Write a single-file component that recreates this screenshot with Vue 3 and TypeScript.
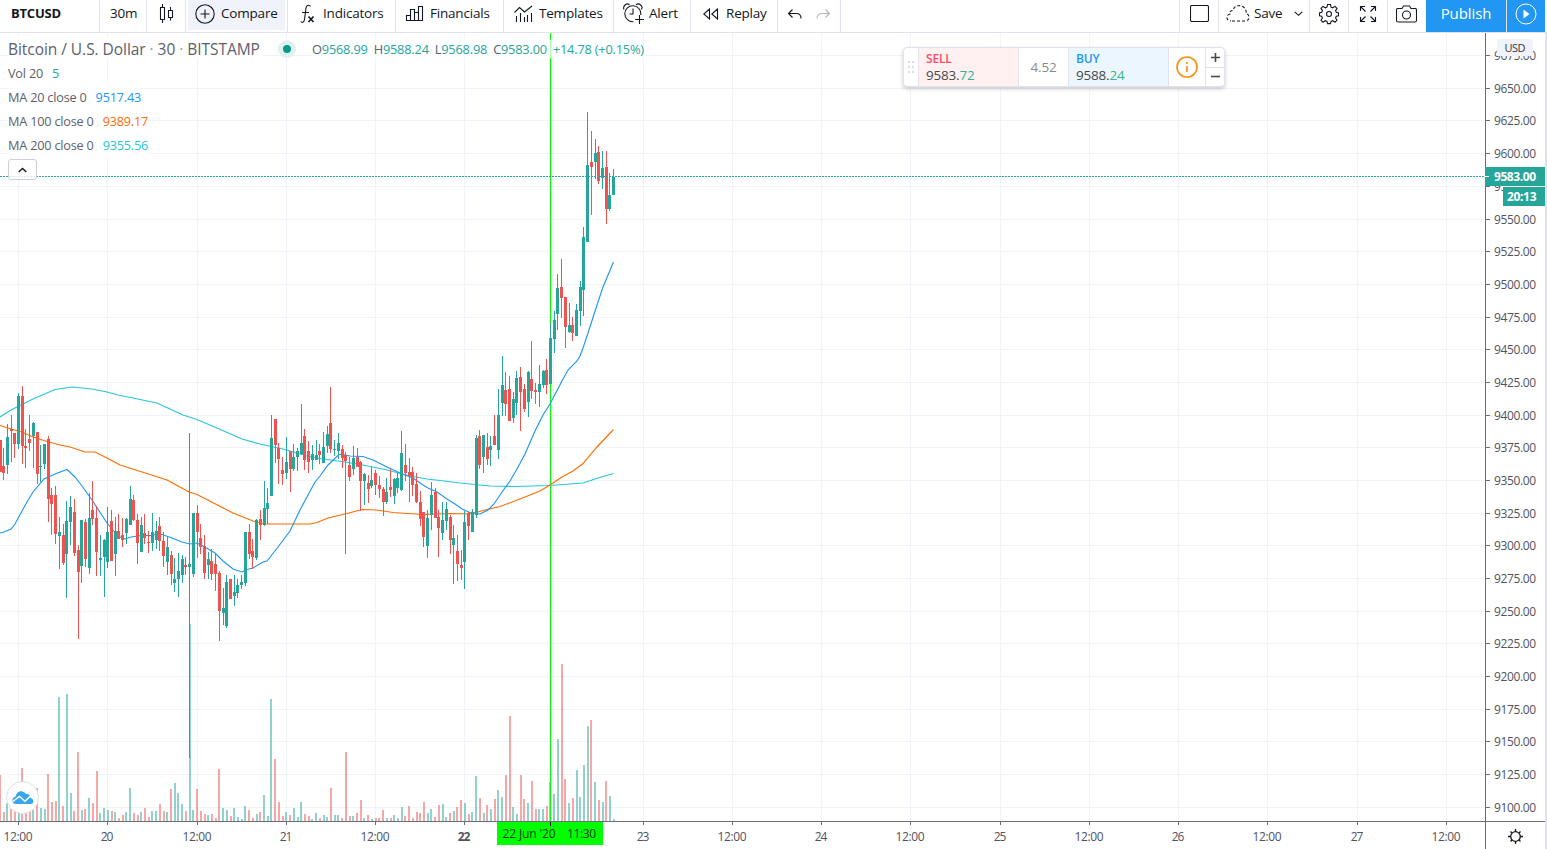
<script setup lang="ts">
import { computed, ref } from 'vue';

// [high, body top, body bottom, low, rising, volume]
type Bar = [number, number, number, number, 0 | 1, number];

const bars: Bar[] = [
  [440, 440, 472, 472, 0, 46], [448, 466, 473, 480, 0, 9], [424, 437, 465, 474, 1, 18], [415, 429, 431, 462, 0, 12],
  [433, 433, 444, 458, 0, 10], [393, 396, 444, 449, 1, 8], [386, 396, 446, 464, 0, 53], [429, 446, 448, 468, 0, 8],
  [415, 439, 443, 451, 0, 10], [422, 423, 436, 468, 1, 11], [432, 432, 474, 484, 0, 33], [445, 466, 467, 482, 1, 13],
  [444, 444, 464, 469, 1, 12], [436, 439, 499, 522, 0, 47], [488, 495, 504, 535, 0, 19], [486, 495, 534, 544, 0, 20],
  [517, 532, 536, 569, 1, 124], [524, 535, 563, 565, 0, 15], [501, 521, 554, 598, 1, 127], [496, 507, 522, 545, 1, 28],
  [499, 512, 553, 556, 0, 10], [545, 550, 572, 639, 0, 69], [520, 520, 566, 583, 1, 11], [519, 522, 559, 567, 0, 12],
  [493, 518, 568, 574, 1, 23], [481, 510, 519, 525, 0, 18], [506, 518, 552, 576, 0, 50], [535, 558, 560, 576, 1, 8],
  [539, 540, 557, 597, 1, 13], [507, 532, 562, 568, 1, 11], [510, 521, 561, 561, 0, 10], [517, 531, 554, 576, 1, 9],
  [514, 531, 539, 539, 0, 3], [518, 535, 540, 547, 0, 6], [518, 519, 533, 544, 1, 9], [486, 499, 525, 525, 1, 33],
  [495, 500, 520, 521, 0, 8], [514, 520, 543, 564, 0, 6], [517, 525, 552, 552, 1, 9], [514, 533, 538, 544, 0, 13],
  [531, 542, 543, 553, 0, 4], [513, 532, 543, 551, 1, 10], [521, 531, 540, 549, 1, 10], [517, 526, 541, 551, 0, 17],
  [532, 541, 556, 567, 0, 10], [537, 547, 562, 575, 1, 9], [551, 555, 574, 585, 0, 32], [558, 579, 583, 592, 1, 38],
  [553, 571, 579, 597, 1, 28], [555, 559, 575, 583, 1, 17], [557, 565, 567, 575, 0, 10], [433, 564, 567, 758, 1, 197],
  [513, 513, 574, 577, 1, 11], [505, 513, 532, 558, 0, 32], [524, 538, 547, 554, 0, 10], [535, 546, 573, 579, 0, 7],
  [552, 559, 565, 579, 1, 6], [549, 561, 574, 580, 0, 7], [553, 564, 574, 591, 0, 3], [571, 573, 611, 641, 0, 52],
  [588, 608, 613, 625, 1, 13], [575, 582, 626, 628, 1, 11], [579, 579, 599, 599, 0, 5], [575, 592, 596, 606, 1, 13],
  [579, 585, 593, 598, 1, 4], [575, 582, 585, 589, 1, 2], [532, 532, 583, 586, 1, 15], [524, 532, 554, 559, 0, 11],
  [539, 551, 557, 569, 0, 3], [519, 520, 558, 560, 1, 7], [510, 519, 525, 540, 0, 9], [481, 508, 525, 526, 1, 26],
  [488, 503, 509, 524, 1, 5], [415, 438, 496, 496, 1, 122], [419, 419, 445, 463, 0, 62], [443, 448, 459, 484, 0, 19],
  [457, 470, 474, 485, 0, 5], [437, 462, 473, 479, 1, 9], [451, 451, 469, 492, 0, 6], [444, 457, 469, 471, 1, 13],
  [448, 451, 457, 471, 1, 4], [404, 443, 454, 455, 1, 19], [429, 436, 460, 470, 0, 7], [441, 451, 462, 473, 0, 5],
  [445, 454, 460, 470, 1, 2], [440, 455, 460, 460, 1, 8], [444, 451, 455, 464, 0, 3], [432, 447, 463, 463, 1, 6],
  [426, 434, 446, 453, 1, 4], [387, 423, 449, 453, 0, 33], [440, 449, 450, 456, 1, 6], [433, 443, 451, 459, 1, 6],
  [445, 449, 458, 468, 0, 3], [452, 455, 461, 554, 0, 69], [457, 465, 477, 481, 0, 5], [446, 458, 469, 475, 1, 5],
  [448, 457, 467, 467, 0, 8], [461, 462, 481, 511, 0, 21], [473, 474, 481, 505, 1, 3], [475, 483, 489, 503, 0, 6],
  [467, 480, 486, 488, 1, 2], [470, 473, 485, 495, 0, 3], [476, 485, 489, 498, 0, 3], [487, 489, 502, 516, 0, 11],
  [478, 492, 502, 504, 1, 3], [469, 487, 490, 497, 0, 3], [478, 479, 496, 504, 1, 6], [473, 478, 488, 493, 1, 3],
  [431, 453, 490, 491, 1, 14], [444, 465, 473, 481, 0, 5], [458, 472, 476, 502, 0, 15], [467, 472, 485, 496, 0, 3],
  [473, 484, 502, 503, 0, 9], [491, 502, 519, 526, 0, 8], [512, 512, 537, 547, 0, 19], [510, 518, 546, 558, 1, 8],
  [482, 495, 515, 530, 1, 12], [488, 492, 518, 518, 0, 4], [510, 517, 528, 557, 0, 16], [502, 520, 533, 540, 1, 17],
  [502, 509, 521, 530, 1, 4], [515, 517, 540, 554, 0, 8], [525, 538, 545, 584, 1, 10], [535, 551, 564, 581, 0, 14],
  [550, 565, 568, 580, 0, 21], [511, 522, 562, 589, 1, 18], [512, 513, 526, 540, 0, 7], [509, 512, 532, 532, 1, 9],
  [435, 438, 515, 518, 1, 45], [430, 436, 465, 469, 0, 23], [435, 435, 457, 473, 1, 8], [433, 447, 459, 465, 0, 16],
  [436, 446, 450, 466, 1, 12], [415, 436, 445, 445, 0, 22], [389, 415, 450, 459, 1, 31], [356, 385, 403, 416, 1, 24],
  [372, 390, 404, 416, 0, 46], [376, 389, 421, 421, 0, 105], [392, 399, 418, 423, 1, 14], [371, 378, 403, 415, 1, 7],
  [367, 377, 392, 431, 0, 46], [384, 389, 409, 412, 0, 22], [371, 372, 402, 417, 1, 18], [341, 379, 391, 399, 0, 40],
  [383, 390, 392, 404, 0, 12], [365, 384, 392, 407, 1, 12], [370, 371, 385, 388, 1, 12], [359, 370, 385, 394, 0, 15],
  [323, 338, 384, 384, 1, 39], [311, 320, 339, 353, 1, 27], [274, 288, 314, 330, 1, 82], [259, 287, 298, 318, 0, 157],
  [297, 297, 327, 348, 0, 42], [303, 325, 332, 333, 1, 18], [317, 325, 333, 341, 0, 23], [304, 310, 336, 336, 1, 51],
  [281, 287, 311, 326, 1, 24], [227, 237, 290, 316, 1, 56], [112, 165, 242, 242, 1, 95], [131, 162, 167, 215, 0, 101],
  [139, 153, 162, 179, 1, 39], [146, 152, 181, 184, 0, 21], [151, 168, 178, 189, 1, 19], [151, 167, 209, 224, 0, 40],
  [173, 195, 209, 211, 1, 25], [169, 177, 195, 195, 1, 2],
];

const barStep = 3.72;
const candles = computed(() =>
  bars.map(([high, top, bottom, low, up, volume], i) => ({
    x: Math.max(0, Math.round(18 + barStep * (i - 5))),
    volumeX: Math.floor(18 + barStep * (i - 5)),
    high,
    top,
    bottom,
    low,
    volume,
    side: up ? 'up' : 'down',
  })),
);

const ma20 =
  '0,533 4,532 11,529 15,524 22,511 27,502 33,492 44,479 55,474 67,469.500 75,477 82,486 92,500 107,523 118,536 125,539 131,537 141,535.500 150,535.500 158,534 162,534.500 172,538 182,542 190,544 197,543 203,546 215,553 223,561 233,569 242,572 247,569.500 253,568 263,562 267,561 278,547 290,531 300,510 315,482 320,476 328,465 339,454.500 343,454.500 350,456 363,456.500 373,460 387,467 400,473 413,478 423,485 428,488 437,492 447,499 455,504 462,509 472,513.500 480,514 488,510 494,504 502,492 510,481 517,469 525,454 535,431 543,415 550,404 562,381 568,370 577,361 580,356 583,348 588,333 598,302 603,287 613.500,262';
const ma100 =
  '0,425.500 11,429 22,432 33,437 47,441.500 60,445 70,447 85,452 95,452 107,458 120,465 150,474.500 167,480 189,492 197,494.500 233,513 253,521 265,524 280,524 310,524 317,522.500 328,518 347,513.500 362,509.500 377,510 393,512.500 423,514.500 450,513.500 470,514 483,510.500 500,506.500 520,499 540,491 550,485 562,477 573,471 583,463.500 597,447 613.500,429.500';
const ma200 =
  '0,417 11,410 22,404.500 33,399 55,389.500 72,387 92,389 107,392 118,395 140,399.500 157,403 183,415 197,419.500 217,428 242,439 260,444 283,449 307,456 320,458.500 345,462 363,465 387,470 410,476 427,479 440,480.500 460,483 490,486 515,486.500 550,485.500 583,483 598,478 613.500,473.500';

const priceLevels = Array.from({ length: 24 }, (_, i) => ({
  y: Math.floor(55.6 + 32.68 * i),
  label: (9675 - 25 * i).toFixed(2),
}));

const timeTicks = [
  { x: 18, label: '12:00' },
  { x: 107, label: '20' },
  { x: 197, label: '12:00' },
  { x: 286, label: '21' },
  { x: 375, label: '12:00' },
  { x: 464, label: '22', strong: true },
  { x: 553, label: '' },
  { x: 643, label: '23' },
  { x: 732, label: '12:00' },
  { x: 821, label: '24' },
  { x: 910, label: '12:00' },
  { x: 1000, label: '25' },
  { x: 1089, label: '12:00' },
  { x: 1178, label: '26' },
  { x: 1267, label: '12:00' },
  { x: 1357, label: '27' },
  { x: 1446, label: '12:00' },
];

const ohlc = [
  { key: 'O', value: '9568.99' },
  { key: 'H', value: '9588.24' },
  { key: 'L', value: '9568.98' },
  { key: 'C', value: '9583.00' },
];

const studies = [
  { name: 'Vol 20', value: '5', color: 'teal' },
  { name: 'MA 20 close 0', value: '9517.43', color: 'blue' },
  { name: 'MA 100 close 0', value: '9389.17', color: 'orange' },
  { name: 'MA 200 close 0', value: '9355.56', color: 'cyan' },
];

const legendOpen = ref(true);
const quantity = ref(1);
</script>

<template>
  <div class="app">
    <header class="toolbar">
      <button class="tool symbol">BTCUSD</button>
      <button class="tool interval">30m</button>
      <button class="tool style">
        <svg width="28" height="28" viewBox="0 0 28 28" class="icon">
          <path d="M9.500 4v4M9.500 19v4M7.500 7.500h4v12h-4zM17.500 7v3M17.500 17.500v3M15.500 10.500h4v7h-4z" />
        </svg>
      </button>
      <button class="tool compare">
        <span class="hover">
          <svg width="20" height="20" viewBox="0 0 20 20" class="icon">
            <circle cx="10" cy="10" r="9.200" />
            <path d="M10 5.500v9M5.500 10h9" />
          </svg>
          <span class="caption">Compare</span>
        </span>
      </button>
      <button class="tool indicators">
        <svg width="16" height="20" viewBox="0 0 16 20" class="icon">
          <path d="M10.500 2.500C9.500 .5 6.500 .8 6 4L4.500 15.500C4 18.500 2 19 .8 17.500M2 8.500h7" />
          <path d="M8.500 12.500l5 5.500M13.500 12.500l-5 5.500" stroke-width="1.600" />
        </svg>
        <span class="caption">Indicators</span>
      </button>
      <button class="tool financials">
        <svg width="19" height="18" viewBox="0 0 19 18" class="icon">
          <path d="M1.500 10.500h4v5h-4zM5.500 4.500h4v11h-4zM9.500 7.500h4v8h-4zM13.500 1.500h4v14h-4z" />
        </svg>
        <span class="caption">Financials</span>
      </button>
      <button class="tool templates">
        <svg width="19" height="18" viewBox="0 0 19 18" class="icon">
          <path d="M.5 7.500l5-5 5 4.500 7.500-6M2.500 11v6M6.500 8v9M10.500 12v5M13.500 10v7M17.500 8v9" />
        </svg>
        <span class="caption">Templates</span>
      </button>
      <button class="tool alert">
        <svg width="21" height="21" viewBox="0 0 21 21" class="icon">
          <path d="M10.500 18.700A8 8 0 1 1 17.700 12M10 5.500v5.500H6.500M1 6.500C-.5 3 3.500-.5 6.500 1.700M18.500 6.500C20.500 3 16-.5 13 1.700M16.500 12v9M12 16.500h9" />
        </svg>
        <span class="caption">Alert</span>
      </button>
      <button class="tool replay">
        <svg width="16" height="12" viewBox="0 0 16 12" class="icon">
          <path d="M6.500 1v10L.8 6zM14.500 1v10L8.800 6z" />
        </svg>
        <span class="caption">Replay</span>
      </button>
      <div class="tool history">
        <svg width="14" height="10" viewBox="0 0 14 10" class="icon">
          <path d="M4.500 .5l-4 4 4 4M.5 4.500h8c3 0 4.500 2 4.500 5" />
        </svg>
        <svg width="14" height="10" viewBox="0 0 14 10" class="icon faded">
          <path d="M9.500 .5l4 4-4 4M13.500 4.500h-8c-3 0-4.500 2-4.500 5" />
        </svg>
      </div>
      <div class="spacer"></div>
      <button class="tool square">
        <svg width="19" height="17" viewBox="0 0 19 17" class="icon">
          <rect x=".5" y=".5" width="18" height="16" rx="1.500" />
        </svg>
      </button>
      <button class="tool save">
        <svg width="24" height="17" viewBox="0 0 24 17" class="icon">
          <path stroke-dasharray="3 2" d="M6 16h13c5 0 5.500-6.500 1-7.500C21 4 17 .5 13 .6 9.500.6 7.500 3 7 5.500 4 5.500 3.500 7.500 4 9-.5 10 0 16 5 16" />
        </svg>
        <span class="caption">Save</span>
        <svg width="9" height="6" viewBox="0 0 9 6" class="icon"><path d="M.7 .8l3.800 3.500L8.300 .8" /></svg>
      </button>
      <button class="tool square">
        <svg width="22" height="22" viewBox="0 0 22 22" class="icon">
          <circle cx="11" cy="11" r="2.500" />
          <path d="M9.500 1.500h3l.5 2.600 1.700.7L17 3.400l2 2-1.400 2.200.7 1.800 2.200.5v2.800l-2.200.5-.7 1.800L19 17.200l-2 2-2.300-1.500-1.700.7-.5 2.200h-3L9 18.400l-1.700-.7L5 19.200l-2-2L4.400 15l-.7-1.800-2.200-.5V9.900l2.200-.5.700-1.800L3 5.400l2-2 2.300 1.400L9 4.100z" />
        </svg>
      </button>
      <button class="tool square">
        <svg width="18" height="18" viewBox="0 0 18 18" class="icon">
          <path d="M1.500 6V1.500H6M1.500 1.500L6.500 6.500M12 1.500h4.500V6M16.500 1.500l-5 5M1.500 12v4.500H6M1.500 16.500l5-5M12 16.500h4.500V12M16.500 16.500l-5-5" />
        </svg>
      </button>
      <button class="tool camera">
        <svg width="21" height="18" viewBox="0 0 21 18" class="icon">
          <path d="M2 3.500h4l1.500-2.500h6L15 3.500h4c1 0 1.500.5 1.500 1.500v10.500c0 1-.5 1.500-1.500 1.500H2C1 17 .5 16.500.5 15.500V5C.5 4 1 3.500 2 3.500z" />
          <circle cx="10.500" cy="10" r="4" />
        </svg>
      </button>
      <button class="publish">Publish</button>
      <button class="play">
        <svg width="22" height="22" viewBox="0 0 22 22">
          <circle cx="11" cy="11" r="10" fill="none" stroke="#fff" />
          <path d="M8.500 6.500v9l6-4.500z" fill="#fff" />
        </svg>
      </button>
    </header>

    <div class="body">
      <main class="pane">
        <svg width="1485" height="788" viewBox="0 33 1485 788" class="plot">
          <g class="grid">
            <rect v-for="t in timeTicks" :key="t.x" :x="t.x" y="33" width="1" height="788" />
            <rect v-for="p in priceLevels" :key="p.label" x="0" :y="p.y" width="1485" height="1" />
          </g>
          <g class="volume">
            <rect
              v-for="(c, i) in candles"
              :key="i"
              :class="c.side"
              :x="c.volumeX"
              :y="821 - c.volume"
              width="2"
              :height="c.volume"
            />
          </g>
          <rect x="550" y="33" width="1" height="788" fill="#00ff00" />
          <polyline :points="ma200" class="ma" stroke="#26c6da" />
          <polyline :points="ma100" class="ma" stroke="#ff6d00" />
          <polyline :points="ma20" class="ma" stroke="#2196f3" />
          <g v-for="(c, i) in candles" :key="i" :class="c.side">
            <rect :x="c.x" :y="c.high" width="1" :height="c.low - c.high" />
            <rect :x="c.x - 1" :y="c.top" width="3" :height="c.bottom - c.top" />
          </g>
          <path d="M0 176.500H1485" stroke="#26a69a" stroke-dasharray="2 1" />
        </svg>

        <div class="legend">
          <div class="headline">
            <span class="title">Bitcoin / U.S. Dollar <i>·</i> 30 <i>·</i> BITSTAMP</span>
            <span class="status"></span>
            <span class="ohlc">
              <span v-for="o in ohlc" :key="o.key">{{ o.key }}<b>{{ o.value }}</b></span>
              <b class="change">+14.78 (+0.15%)</b>
            </span>
          </div>
          <template v-if="legendOpen">
            <div v-for="s in studies" :key="s.name" class="study">
              <span>{{ s.name }}</span>
              <span :class="s.color">{{ s.value }}</span>
            </div>
          </template>
          <button class="collapse" @click="legendOpen = !legendOpen">
            <svg width="9" height="6" viewBox="0 0 9 6"><path d="M.7 5l3.800-3.600L8.300 5" /></svg>
          </button>
        </div>

        <div class="trade">
          <div class="grip"><i v-for="n in 6" :key="n"></i></div>
          <div class="side sell">
            <strong>SELL</strong>
            <span>9583.<em>72</em></span>
          </div>
          <div class="spread">4.52</div>
          <div class="side buy">
            <strong>BUY</strong>
            <span>9588.<em>24</em></span>
          </div>
          <div class="info">
            <svg width="22" height="22" viewBox="0 0 22 22">
              <circle cx="11" cy="11" r="10" />
              <path d="M11 10v6M11 6v2" />
            </svg>
          </div>
          <div class="steps">
            <button @click="quantity++"><svg width="9" height="9"><path d="M4.500 0v9M0 4.500h9" /></svg></button>
            <button @click="quantity--"><svg width="9" height="9"><path d="M0 4.500h9" /></svg></button>
          </div>
        </div>

        <div class="logo">
          <svg width="22" height="14" viewBox="0 0 22 14">
            <path d="M4 13C-.5 13-1 7 3.500 5.500 4.500 1 8-.5 11 .7c1.500.5 2.400 1.300 3 2.300 3-.3 4.500 1.500 4.600 4 3 .5 4.500 6 0 6z" fill="#37a6ef" />
            <path d="M.8 10.500l6.700-5 5.500 4.700L19.500 4" fill="none" stroke="#fff" stroke-width="1.500" />
          </svg>
        </div>
      </main>

      <aside class="prices">
        <svg width="60" height="788" viewBox="1485 33 60 788">
          <rect x="1485" y="33" width="1" height="788" class="line" />
          <g v-for="p in priceLevels" :key="p.label">
            <rect x="1486" :y="p.y" width="4" height="1" class="line" />
            <text x="1494" :y="p.y + 5" textLength="42" class="tick">{{ p.label }}</text>
          </g>
          <rect x="1497" y="39" width="36" height="17" rx="2" fill="#f0f3fa" />
          <text x="1504.500" y="52" textLength="21" class="usd">USD</text>
          <rect x="1485" y="167" width="60" height="19" class="up" />
          <rect x="1485" y="176" width="4" height="1" fill="#fff" />
          <text x="1494" y="181" textLength="42" class="tag">9583.00</text>
          <rect x="1502" y="186" width="43" height="1" fill="#fff" />
          <rect x="1503" y="187" width="42" height="19" class="up" />
          <text x="1507" y="201" textLength="29.500" class="tag">20:13</text>
        </svg>
      </aside>

      <footer class="times">
        <svg width="1545" height="28" viewBox="0 821 1545 28">
          <rect x="0" y="821" width="1545" height="1" class="line" />
          <rect x="1485" y="821" width="1" height="28" class="line" />
          <template v-for="t in timeTicks" :key="t.x">
            <rect :x="t.x" y="822" width="1" height="3" class="line" />
            <text
              :x="t.x"
              y="841"
              text-anchor="middle"
              class="tick"
              :class="{ strong: t.strong }"
              :textLength="t.label.length > 2 ? 29 : t.label ? 12.5 : undefined"
            >{{ t.label }}</text>
          </template>
          <rect x="497" y="822" width="106" height="23" fill="#00ff00" />
          <rect x="550" y="822" width="1" height="4" fill="#000" />
          <text x="502.500" y="838" textLength="53" class="cursor">22 Jun '20</text>
          <text x="567" y="838" textLength="29" class="cursor">11:30</text>
          <g class="sun">
            <circle cx="1515.500" cy="836.500" r="4.800" />
            <path d="M1515.500 829v2.500M1515.500 841.500v2.500M1508 836.500h2.500M1520.500 836.500h2.500M1510.500 831.500l1.500 1.500M1519 840l1.500 1.500M1520.500 831.500l-1.500 1.500M1512 840l-1.500 1.500" />
          </g>
        </svg>
      </footer>
    </div>
  </div>
</template>

<style>
body {
  margin: 0;
  overflow: hidden;
}
</style>

<style scoped>
.app{
  width: 1547px;
  height: 849px;
  background: #fff;
  font-family: "Trebuchet MS", "Open Sans", "Noto Sans", sans-serif;
  color: #131722;
  overflow: hidden;
}
button{
  font: inherit;
  color: inherit;
  background: none;
  border: 0;
  padding: 0;
  letter-spacing: inherit;
}
svg{
  display: block;
  flex: none;
}
.toolbar{
  box-sizing: border-box;
  display: flex;
  height: 33px;
  border-bottom: 1px solid #e0e3eb;
  font-size: 13.5px;
  letter-spacing: -0.2px;
}
.tool{
  box-sizing: border-box;
  display: flex;
  align-items: center;
  flex: none;
  height: 32px;
  padding-bottom: 5px;
  border-right: 1px solid #e0e3eb;
}
.caption{ padding-bottom: 2px; }
.icon{
  fill: none;
  stroke: #131722;
  stroke-width: 1.1;
}
.faded{ stroke: #b2b5be; }
.symbol{
  width: 100px;
  padding: 0 0 7px 11px;
  font-size: 13px;
  font-weight: 700;
}
.interval{ width: 47px; padding: 0 0 7px 10px; }
.style{ width: 39px; padding-left: 6px; }
.compare{ width: 102px; padding: 0 2px 2px; }
.compare .hover{
  box-sizing: border-box;
  display: flex;
  align-items: center;
  gap: 6px;
  width: 97px;
  height: 30px;
  padding: 0 0 3px 7px;
  background: #f0f3fa;
}
.indicators{ width: 108px; padding-left: 12px; gap: 7px; }
.financials{ width: 108px; padding-left: 9px; gap: 6px; }
.templates{ width: 110px; padding-left: 10px; gap: 6px; }
.alert{ width: 77px; padding-left: 9px; gap: 5px; }
.replay{ width: 87px; padding-left: 12px; gap: 7px; }
.history{ width: 63px; padding-left: 10px; gap: 14px; }
.spacer{
  flex: 1;
  border-right: 1px solid #e0e3eb;
}
.square{ width: 39px; justify-content: center; }
.save{ width: 91px; padding-left: 7px; gap: 4px; }
.save .icon:last-child{ margin-left: 8px; }
.camera{ width: 38px; padding-left: 8px; border-right: 0; }
.publish,
.play{
  display: flex;
  align-items: center;
  justify-content: center;
  box-sizing: border-box;
  height: 32px;
  padding-bottom: 5px;
  background: #2196f3;
  color: #fff;
}
.publish{
  width: 80px;
  padding-bottom: 7px;
  font-size: 15px;
  letter-spacing: -0.1px;
}
.play{
  width: 39px;
  padding-right: 1px;
  border-left: 1px solid #e0e3eb;
  margin-right: 2px;
}
.body{
  box-sizing: border-box;
  display: grid;
  grid-template-columns: 1485px 60px;
  grid-template-rows: 788px 28px;
  width: 1547px;
  border-right: 2px solid #e0e3eb;
}
.pane{ position: relative; }
.times{ grid-column: 1 / 3; }
.grid{ fill: #f0f3fa; }
.up{ fill: #26a69a; }
.down{ fill: #ef5350; }
.volume{ opacity: 0.5; }
.ma{
  fill: none;
  stroke-width: 1.15;
}
.line{ fill: #6a6d78; }
.tick{
  fill: #50535e;
  font-size: 12px;
}
.strong{ font-weight: 700; }
.usd{ fill: #333640; font-size: 11px; }
.tag{
  fill: #fff;
  font-size: 12px;
  font-weight: 700;
}
.cursor{
  fill: #003c00;
  font-size: 12px;
}
.sun{
  fill: none;
  stroke: #131722;
  stroke-width: 1.3;
}
.legend{
  position: absolute;
  top: 4px;
  left: 8px;
  color: #5d606b;
  font-size: 12.8px;
  letter-spacing: -0.2px;
}
.headline{
  display: flex;
  align-items: center;
  height: 24px;
  white-space: nowrap;
}
.title{
  width: 254px;
  font-size: 15.5px;
  letter-spacing: -0.05px;
  background: rgba(255, 255, 255, 0.7);
}
.title i{ font-style: normal; color: #9598a1; }
.status{
  width: 8px;
  height: 8px;
  margin: 0 16px;
  border: 5px solid #dff2f0;
  border-radius: 50%;
  background: #089981;
}
.ohlc{
  display: flex;
  gap: 6px;
  background: rgba(255, 255, 255, 0.7);
}
.ohlc b{
  color: #26a69a;
  font-weight: 400;
}
.study{
  display: flex;
  align-items: center;
  gap: 9px;
  width: max-content;
  height: 24px;
  font-size: 12.7px;
  background: rgba(255, 255, 255, 0.7);
}
.teal{ color: #26a69a; }
.blue{ color: #2196f3; }
.orange{ color: #ff6d00; }
.cyan{ color: #26c6da; }
.collapse{
  display: flex;
  align-items: center;
  justify-content: center;
  box-sizing: border-box;
  width: 29px;
  height: 21px;
  margin-top: 2px;
  border: 1px solid #ced0d9;
  border-radius: 3px;
  background: rgba(255, 255, 255, 0.8);
}
.collapse path{
  fill: none;
  stroke: #131722;
  stroke-width: 1.4;
}
.trade{
  position: absolute;
  top: 14px;
  left: 903px;
  display: flex;
  box-sizing: border-box;
  width: 322px;
  height: 40px;
  border: 1px solid #e0e3eb;
  border-radius: 4px;
  background: #fff;
  box-shadow: 0 2px 4px rgba(0, 0, 0, 0.2);
  font-size: 13.5px;
  letter-spacing: -0.2px;
  color: #4a4a4a;
}
.grip{
  display: grid;
  grid-template-columns: 2px 2px;
  gap: 3px 2px;
  place-content: center;
  width: 14px;
}
.grip i{
  width: 2px;
  height: 2px;
  background: #d8dae0;
}
.side{
  display: flex;
  flex-direction: column;
  justify-content: center;
  box-sizing: border-box;
  width: 101px;
  padding: 0 0 1px 7px;
  border-left: 1px solid #e0e3eb;
  border-right: 1px solid #e0e3eb;
  line-height: 16px;
}
.side strong{
  font-size: 12px;
  font-weight: 600;
}
.side em{ font-style: normal; color: #36b38f; }
.sell{ background: #fff0f2; }
.sell strong{ color: #ff4a68; }
.buy{ background: #ecf6fe; }
.buy strong{ color: #2196f3; }
.spread{
  width: 49px;
  line-height: 38px;
  text-align: center;
  color: #8a8a8a;
}
.info{
  display: flex;
  align-items: center;
  justify-content: center;
  width: 36px;
}
.info svg{
  fill: none;
  stroke: #f7931a;
  stroke-width: 1.7;
}
.steps{
  display: flex;
  flex-direction: column;
  flex: 1;
  border-left: 1px solid #e0e3eb;
}
.steps button{
  display: flex;
  align-items: center;
  justify-content: center;
  flex: 1;
}
.steps button + button{ border-top: 1px solid #e0e3eb; }
.steps svg{ stroke: #4a4a4a; stroke-width: 1.6; }
.logo{
  position: absolute;
  left: 6px;
  top: 748px;
  display: flex;
  align-items: center;
  justify-content: center;
  box-sizing: border-box;
  width: 33px;
  height: 33px;
  border: 1px solid #e0e0e0;
  border-radius: 50%;
  background: #fff;
}
</style>
